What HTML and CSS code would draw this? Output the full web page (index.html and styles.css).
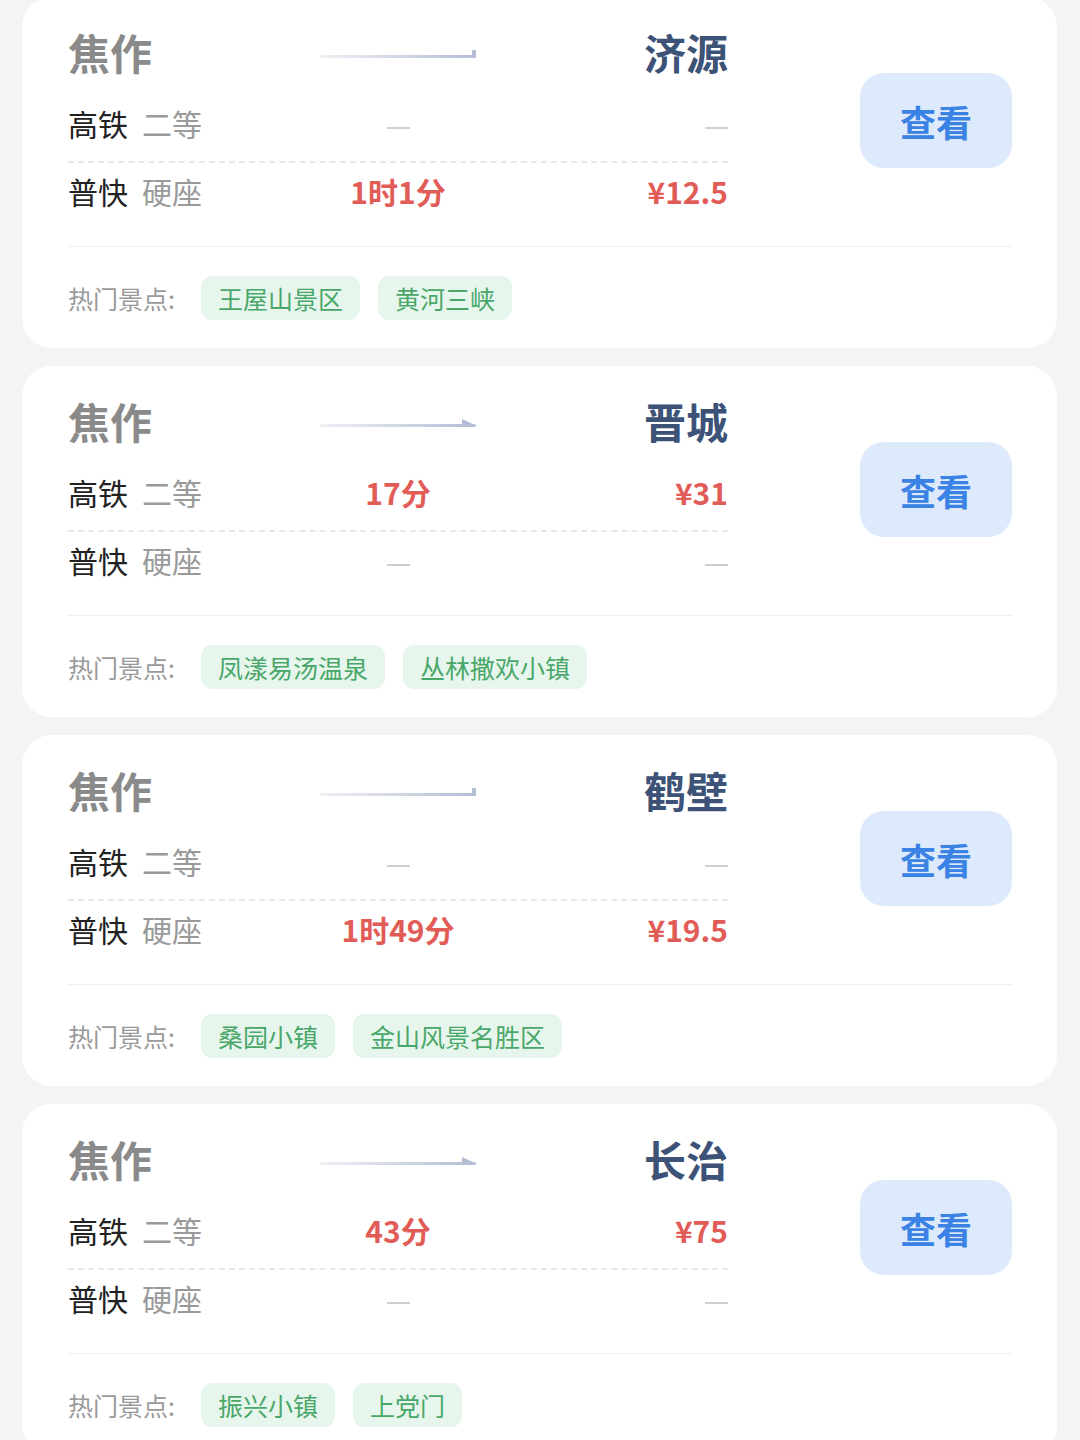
FILE: index.html
```html
<!DOCTYPE html>
<html lang="zh-CN">
<head>
  <meta charset="UTF-8" />
  <meta name="viewport" content="width=device-width, initial-scale=1.0"/>
  <title>焦作出发 - 周边游</title>
  <link rel="stylesheet" href="styles.css">
</head>
<body>
  <div class="lista">

    <!-- 济源 -->
    <div class="tarjeta">
      <div class="arriba">
        <div class="info">
          <div class="fila titulo">
            <span class="desde">焦作</span>
            <svg class="flecha" viewBox="0 0 156 16"><defs><linearGradient id="g1" x1="0" x2="1"><stop offset="0" stop-color="#eef0f5"/><stop offset="1" stop-color="#b3bdd4"/></linearGradient></defs><rect x="0" y="9" width="156" height="3" rx="1.5" fill="url(#g1)"/><rect x="152" y="4" width="4" height="8" rx="1" fill="#b3bdd4"/></svg>
            <span class="hasta">济源</span>
          </div>
          <div class="fila tren linea">
            <span class="tipo">高铁<em>二等</em></span>
            <span class="medio"><i class="nada"></i></span>
            <span class="der"><i class="nada"></i></span>
          </div>
          <div class="fila tren">
            <span class="tipo">普快<em>硬座</em></span>
            <span class="medio rojo">1时1分</span>
            <span class="der rojo">¥12.5</span>
          </div>
        </div>
        <button class="ver">查看</button>
      </div>
      <div class="abajo">
        <span class="etiqueta">热门景点:</span>
        <span class="tag">王屋山景区</span>
        <span class="tag">黄河三峡</span>
      </div>
    </div>

    <!-- 晋城 -->
    <div class="tarjeta">
      <div class="arriba">
        <div class="info">
          <div class="fila titulo">
            <span class="desde">焦作</span>
            <svg class="flecha" viewBox="0 0 156 16"><defs><linearGradient id="g2" x1="0" x2="1"><stop offset="0" stop-color="#eef0f5"/><stop offset="1" stop-color="#b3bdd4"/></linearGradient></defs><rect x="0" y="9" width="156" height="3" rx="1.5" fill="url(#g2)"/><path d="M142 4 L156 10.5 L142 10.5 Z" fill="#b3bdd4"/></svg>
            <span class="hasta">晋城</span>
          </div>
          <div class="fila tren linea">
            <span class="tipo">高铁<em>二等</em></span>
            <span class="medio rojo">17分</span>
            <span class="der rojo">¥31</span>
          </div>
          <div class="fila tren">
            <span class="tipo">普快<em>硬座</em></span>
            <span class="medio"><i class="nada"></i></span>
            <span class="der"><i class="nada"></i></span>
          </div>
        </div>
        <button class="ver">查看</button>
      </div>
      <div class="abajo">
        <span class="etiqueta">热门景点:</span>
        <span class="tag">凤漾易汤温泉</span>
        <span class="tag">丛林撒欢小镇</span>
      </div>
    </div>

    <!-- 鹤壁 -->
    <div class="tarjeta">
      <div class="arriba">
        <div class="info">
          <div class="fila titulo">
            <span class="desde">焦作</span>
            <svg class="flecha" viewBox="0 0 156 16"><defs><linearGradient id="g3" x1="0" x2="1"><stop offset="0" stop-color="#eef0f5"/><stop offset="1" stop-color="#b3bdd4"/></linearGradient></defs><rect x="0" y="9" width="156" height="3" rx="1.5" fill="url(#g3)"/><rect x="152" y="4" width="4" height="8" rx="1" fill="#b3bdd4"/></svg>
            <span class="hasta">鹤壁</span>
          </div>
          <div class="fila tren linea">
            <span class="tipo">高铁<em>二等</em></span>
            <span class="medio"><i class="nada"></i></span>
            <span class="der"><i class="nada"></i></span>
          </div>
          <div class="fila tren">
            <span class="tipo">普快<em>硬座</em></span>
            <span class="medio rojo">1时49分</span>
            <span class="der rojo">¥19.5</span>
          </div>
        </div>
        <button class="ver">查看</button>
      </div>
      <div class="abajo">
        <span class="etiqueta">热门景点:</span>
        <span class="tag">桑园小镇</span>
        <span class="tag">金山风景名胜区</span>
      </div>
    </div>

    <!-- 长治 -->
    <div class="tarjeta">
      <div class="arriba">
        <div class="info">
          <div class="fila titulo">
            <span class="desde">焦作</span>
            <svg class="flecha" viewBox="0 0 156 16"><defs><linearGradient id="g4" x1="0" x2="1"><stop offset="0" stop-color="#eef0f5"/><stop offset="1" stop-color="#b3bdd4"/></linearGradient></defs><rect x="0" y="9" width="156" height="3" rx="1.5" fill="url(#g4)"/><path d="M142 4 L156 10.5 L142 10.5 Z" fill="#b3bdd4"/></svg>
            <span class="hasta">长治</span>
          </div>
          <div class="fila tren linea">
            <span class="tipo">高铁<em>二等</em></span>
            <span class="medio rojo">43分</span>
            <span class="der rojo">¥75</span>
          </div>
          <div class="fila tren">
            <span class="tipo">普快<em>硬座</em></span>
            <span class="medio"><i class="nada"></i></span>
            <span class="der"><i class="nada"></i></span>
          </div>
        </div>
        <button class="ver">查看</button>
      </div>
      <div class="abajo">
        <span class="etiqueta">热门景点:</span>
        <span class="tag">振兴小镇</span>
        <span class="tag">上党门</span>
      </div>
    </div>

  </div>
</body>
</html>
```

FILE: styles.css
```css
body {
  margin: 0;
  background-color: #f4f4f4;
  font-family: "Noto Sans CJK SC", "Noto Sans", sans-serif;
  color: #222;
}
.lista {
  display: flex;
  flex-direction: column;
  gap: 18px;
  padding: 0 23px 0 22px;
  margin-top: -3px;
}
.tarjeta {
  background-color: #fff;
  border-radius: 30px;
  height: 351px;
  box-sizing: border-box;
  padding: 24px 45px 0 46px;
  display: flex;
  flex-direction: column;
}
.arriba {
  display: flex;
  justify-content: space-between;
  align-items: flex-start;
  padding-bottom: 21px;
  border-bottom: 1px solid #f0f0f0;
}
.info {
  width: 660px;
}
.fila {
  display: grid;
  grid-template-columns: 252px 156px 252px;
  align-items: center;
  box-sizing: border-box;
}
.titulo {
  height: 60px;
  font-size: 42px;
  font-weight: 700;
  margin-bottom: 10px;
}
.desde {
  color: #8a8a8a;
}
.hasta {
  color: #3d5277;
  text-align: right;
}
.flecha {
  width: 156px;
  height: 16px;
  margin-top: 4px;
}
.tren {
  height: 62px;
  padding-bottom: 6px;
  font-size: 30px;
}
.linea {
  height: 72px;
  border-bottom: 2px dashed #e8e8e8;
}
.tipo em {
  font-style: normal;
  color: #9a9a9a;
  margin-left: 14px;
}
.medio {
  text-align: center;
}
.der {
  text-align: right;
}
.rojo {
  color: #e25c57;
  font-weight: 700;
}
.nada {
  display: inline-block;
  width: 23px;
  height: 2px;
  background-color: #cfcfcf;
  vertical-align: middle;
}
.ver {
  margin-top: 52px;
  width: 152px;
  height: 95px;
  border: none;
  border-radius: 24px;
  background-color: #dceafc;
  color: #3a82e4;
  font-family: inherit;
  font-size: 36px;
  font-weight: 700;
  cursor: pointer;
}
.abajo {
  flex: 1;
  display: flex;
  align-items: center;
  gap: 18px;
}
.etiqueta {
  font-size: 25px;
  color: #9a9a9a;
  margin-right: 8px;
}
.tag {
  height: 44px;
  line-height: 44px;
  padding: 0 17px;
  border-radius: 11px;
  background-color: #e7f6ed;
  color: #4aa76a;
  font-size: 25px;
}
```
